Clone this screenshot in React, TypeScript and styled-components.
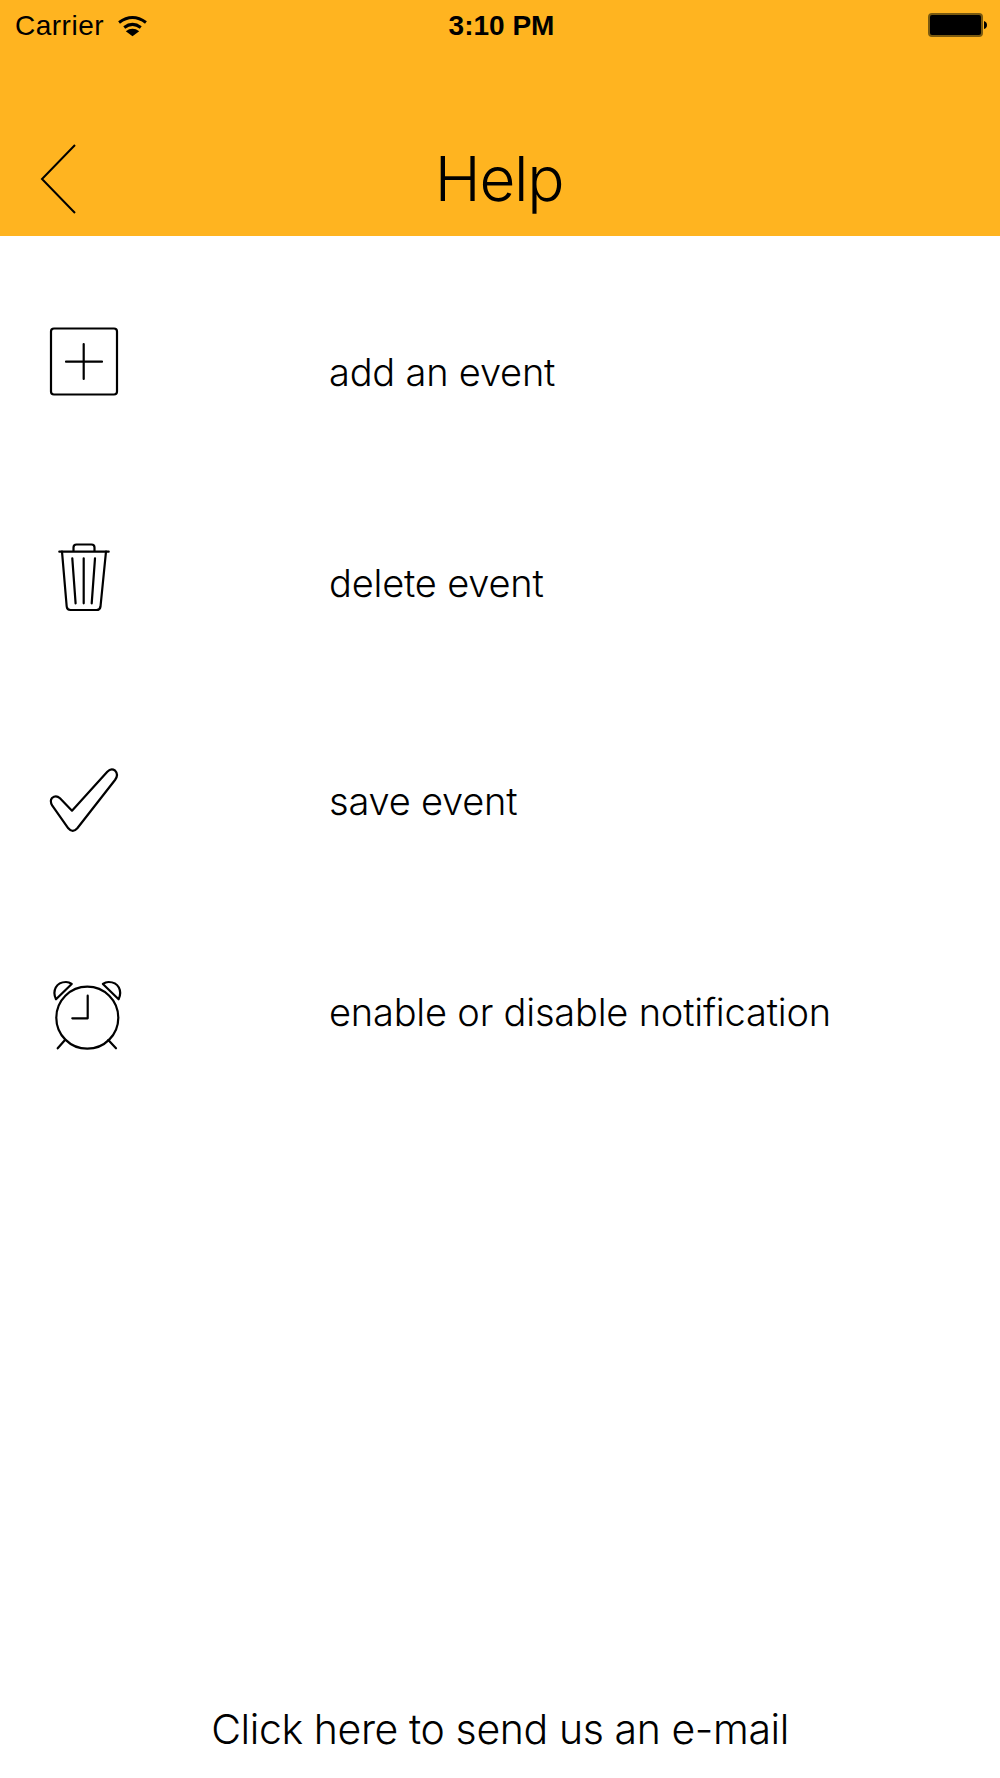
import React from "react";
import styled, { createGlobalStyle } from "styled-components";

const GlobalStyle = createGlobalStyle`
  html, body {
    margin: 0;
    padding: 0;
    background: #fff;
  }
`;

const Page = styled.div`
  width: 1000px;
  height: 1778px;
  display: flex;
  flex-direction: column;
  overflow: hidden;
  background: #fff;
  color: #000;
  font-family: Inter, Roboto, "Liberation Sans", sans-serif;
  font-weight: 300;
`;

const Header = styled.header`
  height: 236px;
  background: #ffb420;
  display: flex;
  flex-direction: column;
`;

const StatusBar = styled.div`
  height: 50px;
  padding: 0 12px 0 15px;
  display: grid;
  grid-template-columns: 1fr auto 1fr;
  align-items: center;
  font-family: "Liberation Sans", sans-serif;
  font-weight: 400;
  font-size: 28px;
`;

const Carrier = styled.div`
  display: flex;
  align-items: center;
  gap: 13px;
  letter-spacing: 0.5px;
  line-height: 36px;
  padding-top: 2px;
`;

const Clock = styled.div`
  font-weight: 700;
  line-height: 36px;
  padding-top: 1px;
`;

const BatteryWrap = styled.div`
  display: flex;
  justify-content: flex-end;
`;

const NavBar = styled.nav`
  flex: 1;
  padding: 72px 40px 0;
  display: grid;
  grid-template-columns: 1fr auto 1fr;
  align-items: center;
`;

const Title = styled.h1`
  margin: 0 2px 0 0;
  font-size: 62px;
  font-weight: 300;
  line-height: 76px;
  letter-spacing: -1.3px;
`;

const List = styled.div`
  padding: 74px 0 0 30px;
  display: flex;
  flex-direction: column;
`;

const Row = styled.div<{ $height: number }>`
  height: ${(p) => p.$height}px;
  display: flex;
  align-items: flex-start;
`;

const IconBox = styled.svg`
  width: 110px;
  height: 110px;
  flex: none;
  fill: none;
  stroke: #000;
  stroke-width: 2.2;
  stroke-linecap: round;
  stroke-linejoin: round;
`;

const Label = styled.div<{ $top: number }>`
  margin: ${(p) => p.$top}px 0 0 189px;
  font-size: 38px;
  line-height: 46px;
  letter-spacing: -0.2px;
  white-space: nowrap;
`;

const Footer = styled.div`
  margin-top: auto;
  padding-bottom: 23px;
  text-align: center;
  font-size: 41px;
  line-height: 52px;
  letter-spacing: -0.4px;
`;

const PlusIcon = () => (
  <IconBox viewBox="0 0 110 110">
    <rect x="21" y="18.5" width="66" height="66" rx="3" />
    <path d="M53.7 34v35M36 51.7h36" />
  </IconBox>
);

const TrashIcon = () => (
  <IconBox viewBox="0 0 110 110">
    <path d="M29.3 21.7h49.4" />
    <path d="M43.5 21v-3.5q0-3 3-3h15q3 0 3 3v3.5" />
    <path d="M32 21.7l4.7 54.8q.3 3.5 3.8 3.5h26q3.5 0 4-3.5l5.5-54.8" />
    <path d="M42.3 28.3l3.3 45M53.7 28.3v45M65 28.3l-3.3 45" />
  </IconBox>
);

const CheckIcon = () => (
  <IconBox viewBox="0 0 110 110">
    <path d="M22.3 55.7Q19.5 51 22 48Q26 44.5 30 48.3L42 60.7L77.3 21.7Q81 18 85 20.5Q89 24.5 85 30L47.3 78.3Q42.7 83.5 38.3 78.3Z" />
  </IconBox>
);

const AlarmIcon = () => (
  <IconBox viewBox="0 0 110 110">
    <circle cx="57.3" cy="52.7" r="31" />
    <path d="M57.7 30.7v22.6H42.3" />
    <path d="M26 34.3C22 26 26 17 36 17Q39 17 41.7 19Z" />
    <path d="M88.6 34.3C92.6 26 88.6 17 78.6 17Q75.6 17 72.9 19Z" />
    <path d="M35 75l-7.3 8.3M78.3 75l7.7 8.3" />
  </IconBox>
);

const WifiIcon = () => (
  <svg width="31" height="22" viewBox="0 0 30 20" fill="none" stroke="#000" strokeWidth="3">
    <path d="M2 6.5Q15 -3 28 6.5" />
    <path d="M7 11.5Q15 5.5 23 11.5" />
    <path d="M8.5 15L15 20L21.5 15Q15 10.5 8.5 15Z" fill="#000" stroke="none" />
  </svg>
);

const BatteryIcon = () => (
  <svg width="60" height="24" viewBox="0 0 60 24">
    <rect x="1" y="1" width="53" height="22" rx="3" fill="#000" stroke="#7a5a10" strokeWidth="2" />
    <path d="M56 8q3 1 3 4t-3 4z" fill="#000" />
  </svg>
);

const BackIcon = () => (
  <svg width="36" height="70" viewBox="0 0 36 70" fill="none" stroke="#000" strokeWidth="2">
    <path d="M35 1L2 35L35 69" />
  </svg>
);

const rows = [
  { icon: <PlusIcon />, text: "add an event", height: 220, top: 39 },
  { icon: <TrashIcon />, text: "delete event", height: 220, top: 30 },
  { icon: <CheckIcon />, text: "save event", height: 215, top: 28 },
  { icon: <AlarmIcon />, text: "enable or disable notification", height: 110, top: 24 },
];

export default function App() {
  return (
    <Page>
      <GlobalStyle />
      <Header>
        <StatusBar>
          <Carrier>
            Carrier
            <WifiIcon />
          </Carrier>
          <Clock>3:10 PM</Clock>
          <BatteryWrap>
            <BatteryIcon />
          </BatteryWrap>
        </StatusBar>
        <NavBar>
          <BackIcon />
          <Title>Help</Title>
        </NavBar>
      </Header>
      <List>
        {rows.map((row) => (
          <Row key={row.text} $height={row.height}>
            {row.icon}
            <Label $top={row.top}>{row.text}</Label>
          </Row>
        ))}
      </List>
      <Footer>Click here to send us an e-mail</Footer>
    </Page>
  );
}
